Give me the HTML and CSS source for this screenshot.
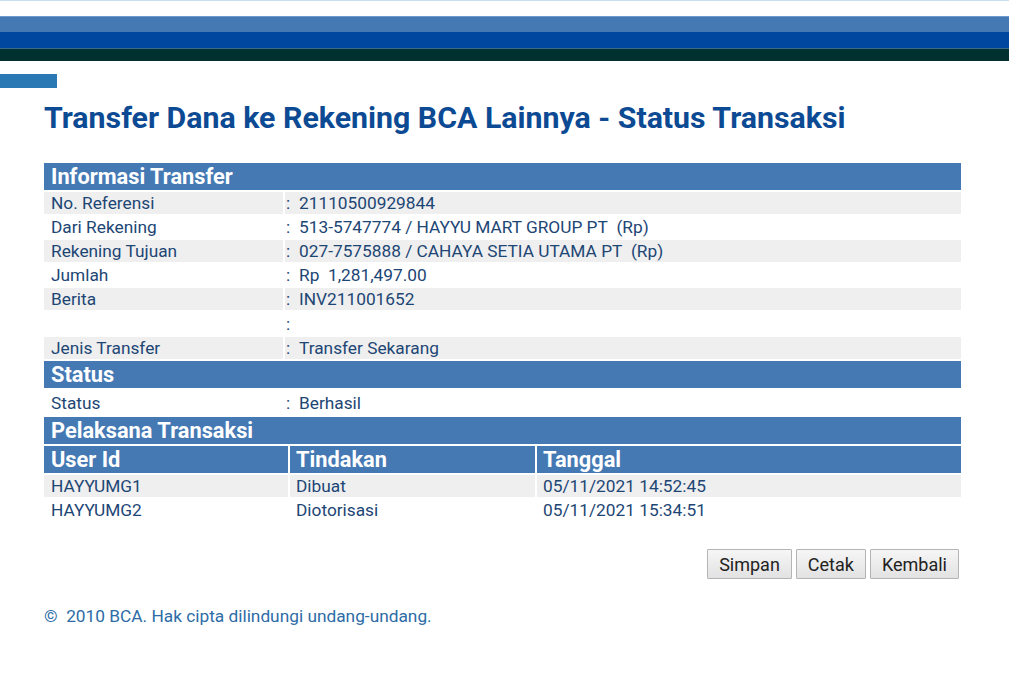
FILE: index.html
```html
<!DOCTYPE html>
<html>
<head>
<meta charset="utf-8">
<link rel="stylesheet" href="styles.css">
</head>
<body>
<div class="topline"></div>
<div class="bands">
  <div class="band band1"></div>
  <div class="band band2"></div>
  <div class="band band3"></div>
</div>
<div class="tab"></div>
<main class="content">
  <h1 class="title">Transfer Dana ke Rekening BCA Lainnya - Status Transaksi</h1>
  <table class="info">
    <colgroup><col class="c-label"><col></colgroup>
    <tr><th colspan="2" class="sec">Informasi Transfer</th></tr>
    <tr class="g"><td class="lbl">No. Referensi</td><td class="val"><span class="colon">:</span>21110500929844</td></tr>
    <tr><td class="lbl">Dari Rekening</td><td class="val"><span class="colon">:</span>513-5747774 / HAYYU MART GROUP PT&nbsp; (Rp)</td></tr>
    <tr class="g"><td class="lbl">Rekening Tujuan</td><td class="val"><span class="colon">:</span>027-7575888 / CAHAYA SETIA UTAMA PT&nbsp; (Rp)</td></tr>
    <tr><td class="lbl">Jumlah</td><td class="val"><span class="colon">:</span>Rp&nbsp; 1,281,497.00</td></tr>
    <tr class="g"><td class="lbl">Berita</td><td class="val"><span class="colon">:</span>INV211001652</td></tr>
    <tr class="tall"><td class="lbl"></td><td class="val"><span class="colon">:</span></td></tr>
    <tr class="g"><td class="lbl">Jenis Transfer</td><td class="val"><span class="colon">:</span>Transfer Sekarang</td></tr>
    <tr><th colspan="2" class="sec">Status</th></tr>
    <tr class="status"><td class="lbl">Status</td><td class="val"><span class="colon">:</span>Berhasil</td></tr>
  </table>
  <table class="exec">
    <colgroup><col class="c-user"><col class="c-act"><col></colgroup>
    <tr><th colspan="3" class="sec">Pelaksana Transaksi</th></tr>
    <tr><th class="sub">User Id</th><th class="sub">Tindakan</th><th class="sub">Tanggal</th></tr>
    <tr class="g"><td>HAYYUMG1</td><td>Dibuat</td><td>05/11/2021 14:52:45</td></tr>
    <tr><td>HAYYUMG2</td><td>Diotorisasi</td><td>05/11/2021 15:34:51</td></tr>
  </table>
  <div class="actions">
    <button class="btn">Simpan</button>
    <button class="btn">Cetak</button>
    <button class="btn">Kembali</button>
  </div>
  <p class="footer">©&nbsp; 2010 BCA. Hak cipta dilindungi undang-undang.</p>
</main>
</body>
</html>
```

FILE: styles.css
```css
html, body {
  margin: 0;
  padding: 0;
  background: #ffffff;
}
body {
  font-family: Roboto, "Liberation Sans", sans-serif;
  color: #1d4675;
}
.topline {
  height: 1px;
  background: #c6dff0;
}
.bands {
  margin-top: 15px;
}
.band1 {
  height: 16px;
  background: #4479b4;
  border-top: 1px solid #6f9ccd;
  box-sizing: border-box;
}
.band2 {
  height: 16px;
  background: #0047a0;
}
.band3 {
  height: 13px;
  background: #003030;
  border-top: 1px solid #3a6a8a;
  box-sizing: border-box;
}
.tab {
  width: 57px;
  height: 14px;
  margin-top: 13px;
  background: #2a78b4;
}
.content {
  padding: 0 48px 0 44px;
}
.title {
  margin: 12px 0 0 0;
  font-size: 30.3px;
  font-weight: 700;
  color: #0d4a94;
  line-height: 36px;
}
table {
  width: 917px;
  border-collapse: separate;
  border-spacing: 0;
  font-size: 17.3px;
}
.info {
  margin-top: 27px;
}
.c-label { width: 241px; }
.c-user { width: 246px; }
.c-act { width: 247px; }
th.sec {
  background: #4479b4;
  color: #ffffff;
  font-size: 21.8px;
  font-weight: 700;
  text-align: left;
  height: 27px;
  padding: 0 0 0 7px;
  line-height: 27px;
  border-bottom: 2px solid #ffffff;
}
td {
  height: 22px;
  padding: 0 0 0 7px;
  line-height: 22px;
  border-bottom: 2px solid #ffffff;
  white-space: nowrap;
}
tr.tall td {
  height: 23px;
}
tr.status td {
  height: 25px;
}
td.lbl {
  border-right: 2px solid #ffffff;
}
td.val {
  padding-left: 1px;
}
.colon {
  display: inline-block;
  width: 13px;
}
tr.g td {
  background: #efefef;
}
.exec {
  margin-top: 0;
}
.exec td {
  border-right: 2px solid #ffffff;
}
.exec td:last-child,
.exec th.sub:last-child {
  border-right: 0;
}
.exec td + td,
.exec th.sub + th.sub {
  padding-left: 6px;
}
th.sub {
  background: #4479b4;
  color: #ffffff;
  font-size: 21.8px;
  font-weight: 700;
  text-align: left;
  height: 27px;
  line-height: 27px;
  padding: 0 0 0 7px;
  border-right: 2px solid #ffffff;
  border-bottom: 2px solid #ffffff;
}
.actions {
  display: flex;
  justify-content: flex-end;
  gap: 4px;
  margin-top: 26px;
  width: 915px;
}
.btn {
  font-family: Roboto, "Liberation Sans", sans-serif;
  font-size: 18px;
  color: #222222;
  height: 30px;
  padding: 0 11px;
  border: 1px solid #b4b4b4;
  border-radius: 1px;
  background: linear-gradient(#f6f6f6, #e2e2e2);
}
.footer {
  margin: 27px 0 0 0;
  font-size: 17.3px;
  color: #2d6ca6;
  line-height: 20px;
}
```
